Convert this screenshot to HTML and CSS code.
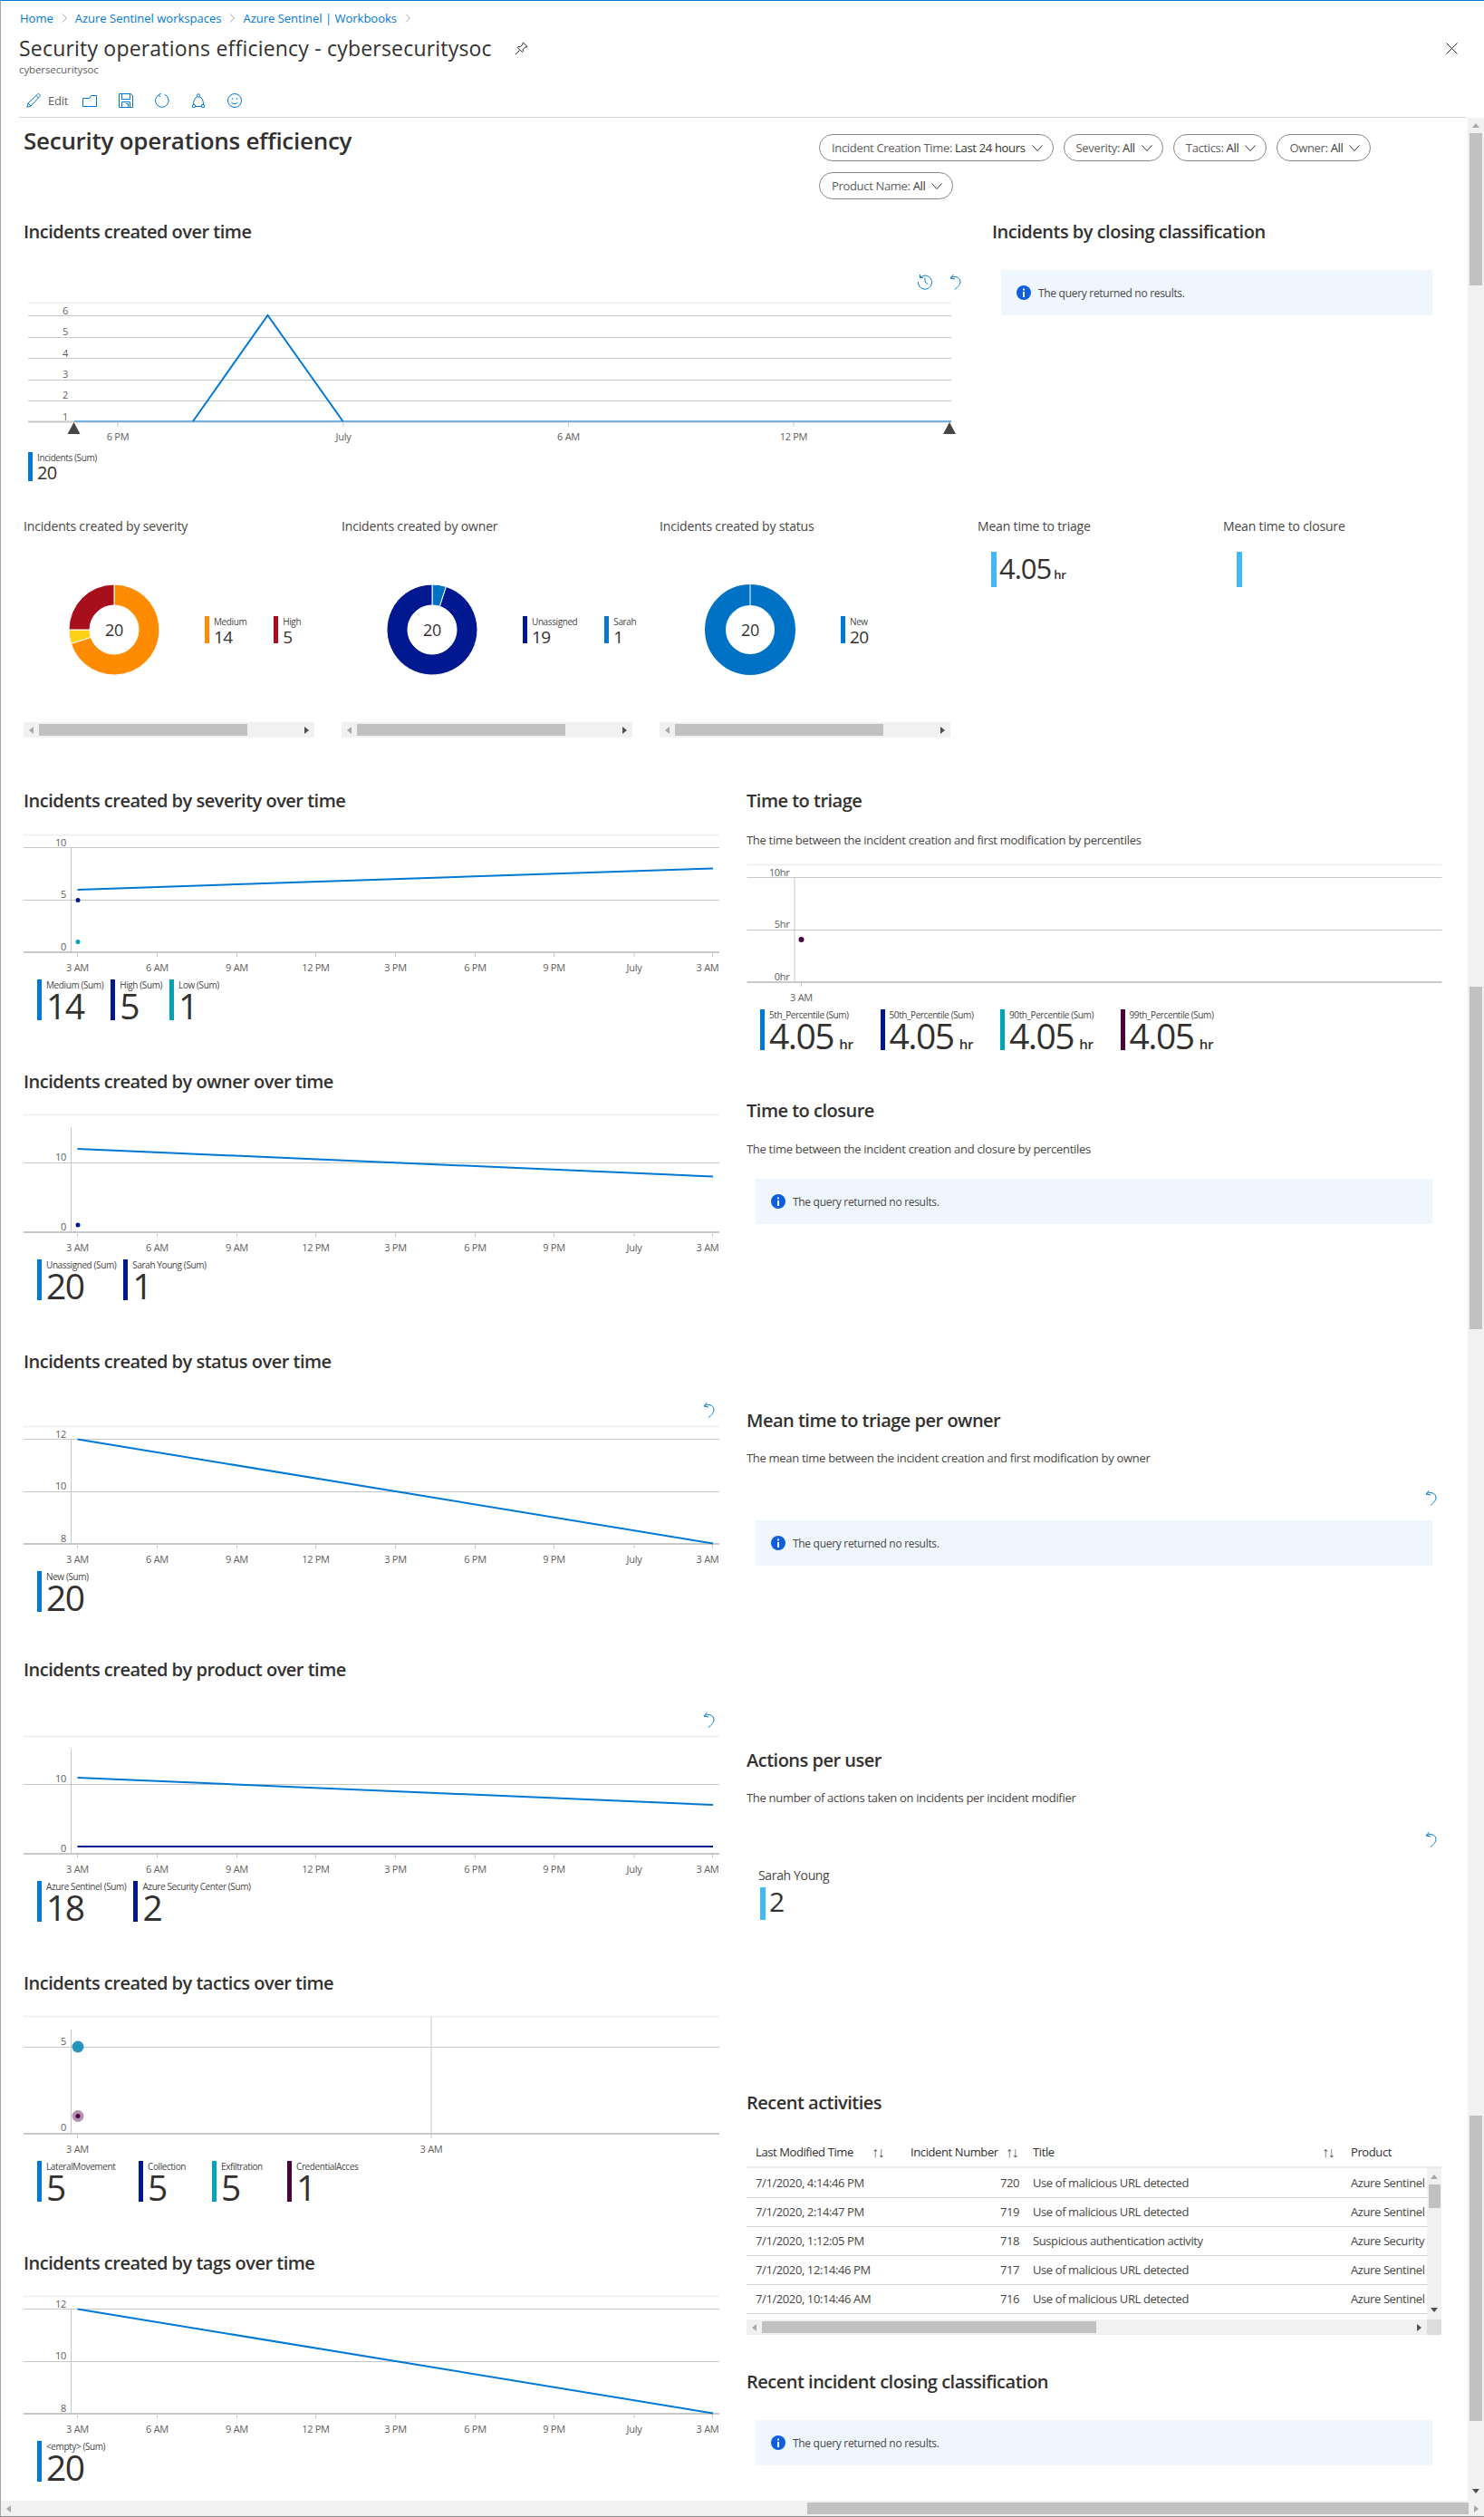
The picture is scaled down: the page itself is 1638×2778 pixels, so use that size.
FILE: index.html
```html
<!DOCTYPE html>
<html lang="en">
<head>
<meta charset="utf-8">
<title>Security operations efficiency - cybersecuritysoc</title>
<link rel="stylesheet" href="styles.css">
</head>
<body>
<div class="blade">
  <header class="head">
    <nav class="crumbs">
      <a>Home</a><svg class="crumb-sep" viewBox="0 0 6 10"><path d="M1 .5 5.5 5 1 9.5"/></svg>
      <a>Azure Sentinel workspaces</a><svg class="crumb-sep" viewBox="0 0 6 10"><path d="M1 .5 5.5 5 1 9.5"/></svg>
      <a>Azure Sentinel | Workbooks</a><svg class="crumb-sep" viewBox="0 0 6 10"><path d="M1 .5 5.5 5 1 9.5"/></svg>
    </nav>
    <div class="title-row">
      <div class="blade-title">Security operations efficiency - cybersecuritysoc</div>
      <svg class="pin" viewBox="0 0 15 15"><path d="M9.5 1 14 5.5l-1 .6-1-.4-2.7 2.7.1 2.2-1 1L3.200 6.400l1-1 2.200.1L9.100 2.800l-.4-1zM5.500 9.500 1 14"/></svg>
      <svg class="close" viewBox="0 0 13 13"><path d="M.5.5l12 12M12.500.5l-12 12"/></svg>
    </div>
    <div class="sub">cybersecuritysoc</div>
    <div class="toolbar">
      <span class="tool-edit">
        <svg class="ic" viewBox="0 0 16 16"><path d="M12.500 1c.7-.5 1.700-.4 2.200.2.600.6.700 1.500.2 2.200L5 14 .8 15.200 2 11zM2 11l3 3M11 2.600l2.600 2.600"/></svg>
        <span>Edit</span>
      </span>
      <svg class="ic" viewBox="0 0 16 16"><path d="M.5 5.500H8L9.500 2.500H15.500V14.500H.5Z"/></svg>
      <svg class="ic" viewBox="0 0 16 16"><path d="M.5.5h13l2 2v13H.5zM3.500.5v6h9v-6M3.500 15.500v-6h9v6M8 11.500h2.500v4"/></svg>
      <svg class="ic" viewBox="0 0 16 16"><path d="M10.500 1.200A7.300 7.300 0 1 1 4.500 1.500M4.500 1.500 7 0M4.500 1.500 5.500 4"/></svg>
      <svg class="ic" viewBox="0 0 16 16"><circle cx="8" cy="2.500" r="1.700"/><circle cx="3" cy="14" r="1.700"/><circle cx="13" cy="14" r="1.700"/><path d="M6.800 3.500C4 5 2.500 8 2.500 12.300M9.200 3.500C12 5 13.500 8 13.500 12.300M4.700 14.500h6.600"/></svg>
      <svg class="ic" viewBox="0 0 16 16"><circle cx="8" cy="8" r="7.500"/><circle class="ic-dot" cx="5.500" cy="6" r=".8"/><circle class="ic-dot" cx="10.500" cy="6" r=".8"/><path d="M4.500 10c1.800 2.200 5.200 2.200 7 0"/></svg>
    </div>
  </header>

  <div class="work">
    <main class="main">
      <div class="top">
        <div class="top-title"><h1>Security operations efficiency</h1></div>
        <div class="filters">
          <button class="pill"><span>Incident Creation Time: <b>Last 24 hours</b></span><svg class="chev" viewBox="0 0 12 7"><path d="M.5.500 6 6.500 11.500.5"/></svg></button>
          <button class="pill"><span>Severity: <b>All</b></span><svg class="chev" viewBox="0 0 12 7"><path d="M.5.500 6 6.500 11.500.5"/></svg></button>
          <button class="pill"><span>Tactics: <b>All</b></span><svg class="chev" viewBox="0 0 12 7"><path d="M.5.500 6 6.500 11.500.5"/></svg></button>
          <button class="pill"><span>Owner: <b>All</b></span><svg class="chev" viewBox="0 0 12 7"><path d="M.5.500 6 6.500 11.500.5"/></svg></button>
          <button class="pill"><span>Product Name: <b>All</b></span><svg class="chev" viewBox="0 0 12 7"><path d="M.5.500 6 6.500 11.500.5"/></svg></button>
        </div>
      </div>

      <div class="over">
        <section class="over-left">
          <h2>Incidents created over time</h2>
          <div class="tools tools-over">
            <svg class="ic-undo hist" viewBox="0 0 18 18"><path d="M3.500 4.500A7.500 7.500 0 1 1 1.500 9M3.500 1v3.500H7M9 4.500V9l3 2.500"/></svg>
            <svg class="ic-undo" viewBox="0 0 14 18"><path d="M4.500 1 1 5l5 1M1 5c4-3 11-1.500 11 4 0 3-3 6-6 8.500"/></svg>
          </div>
          <svg class="chart chart-wide" viewBox="31 334 1024 158">
            <path class="top-line" d="M31 334.500H1050"/>
            <path class="grid" d="M31 348.500H1050M31 372.500H1050M31 395.500H1050M31 419.500H1050M31 442.500H1050"/>
            <path class="axis" d="M31 465.500H1050"/>
            <path class="tk" d="M130 466v5M379 466v5M627.500 466v5M876 466v5"/>
            <text class="yl" x="75" y="347">6</text><text class="yl" x="75" y="370">5</text><text class="yl" x="75" y="394">4</text><text class="yl" x="75" y="417">3</text><text class="yl" x="75" y="440">2</text><text class="yl" x="75" y="464">1</text>
            <text class="xl" x="130" y="486">6 PM</text><text class="xl" x="379" y="486">July</text><text class="xl" x="627.500" y="486">6 AM</text><text class="xl" x="876" y="486">12 PM</text>
            <polyline class="flat" points="82,465 1050,465"/>
            <polyline class="ln" points="213,465 295.500,348 378.500,465"/>
            <path class="handle" d="M81.500 466l7 13h-14zM1048 466l7 13h-14z"/>
          </svg>
          <div class="kpi kpi-mid c-blue"><div class="k-l">Incidents (Sum)</div><div class="k-v">20</div></div>
        </section>
        <section class="over-right">
          <h2>Incidents by closing classification</h2>
          <div class="notice notice-over">
            <svg class="info" viewBox="0 0 16 16"><circle cx="8" cy="8" r="8"/><rect x="7" y="7" width="2" height="6"/><rect x="7" y="3.500" width="2" height="2"/></svg>
            <span>The query returned no results.</span>
          </div>
        </section>
      </div>

      <div class="tiles">
        <section class="tile">
          <h3>Incidents created by severity</h3>
          <div class="donut-body">
            <svg class="donut" viewBox="0 0 100 100">
              <path class="w-orange" d="M50 0A50 50 0 1 1 2.450 65.450L24.320 58.340A27 27 0 1 0 50 23Z"/>
              <path class="w-yellow" d="M2.450 65.450A50 50 0 0 1 0 50L23 50A27 27 0 0 0 24.320 58.340Z"/>
              <path class="w-red" d="M0 50A50 50 0 0 1 50 0L50 23A27 27 0 0 0 23 50Z"/>
              <text class="dn" x="50" y="57">20</text>
            </svg>
            <div class="d-legend">
              <div class="kpi kpi-sm c-orange"><div class="k-l">Medium</div><div class="k-v">14</div></div>
              <div class="kpi kpi-sm c-red"><div class="k-l">High</div><div class="k-v">5</div></div>
            </div>
          </div>
          <div class="hs"><i class="a-l"></i><i class="th th-tile"></i><i class="sp"></i><i class="a-r"></i></div>
        </section>
        <section class="tile">
          <h3>Incidents created by owner</h3>
          <div class="donut-body">
            <svg class="donut" viewBox="0 0 100 100">
              <path class="w-blue" d="M50 0A50 50 0 0 1 65.450 2.450L58.340 24.320A27 27 0 0 0 50 23Z"/>
              <path class="w-navy" d="M65.450 2.450A50 50 0 1 1 50 0L50 23A27 27 0 1 0 58.340 24.320Z"/>
              <text class="dn" x="50" y="57">20</text>
            </svg>
            <div class="d-legend">
              <div class="kpi kpi-sm c-navy"><div class="k-l">Unassigned</div><div class="k-v">19</div></div>
              <div class="kpi kpi-sm c-blue"><div class="k-l">Sarah</div><div class="k-v">1</div></div>
            </div>
          </div>
          <div class="hs"><i class="a-l"></i><i class="th th-tile"></i><i class="sp"></i><i class="a-r"></i></div>
        </section>
        <section class="tile">
          <h3>Incidents created by status</h3>
          <div class="donut-body">
            <svg class="donut" viewBox="0 0 100 100">
              <circle class="w-ring" cx="50" cy="50" r="38.500"/>
              <path class="w-cut" d="M50 0V23"/>
              <text class="dn" x="50" y="57">20</text>
            </svg>
            <div class="d-legend">
              <div class="kpi kpi-sm c-blue"><div class="k-l">New</div><div class="k-v">20</div></div>
            </div>
          </div>
          <div class="hs"><i class="a-l"></i><i class="th th-tile"></i><i class="sp"></i><i class="a-r"></i></div>
        </section>
        <section class="tile tile-mean">
          <h3>Mean time to triage</h3>
          <div class="kpi kpi-mean c-sky"><span class="k-v">4.05</span><span class="k-u">hr</span></div>
        </section>
        <section class="tile tile-mean">
          <h3>Mean time to closure</h3>
          <div class="kpi kpi-mean c-sky"></div>
        </section>
      </div>

      <div class="cols">
        <div class="col">
          <section class="sec">
            <h2>Incidents created by severity over time</h2>
            <svg class="chart mt-23" viewBox="26 921 768 152">
              <path class="top-line" d="M26 921.500H794"/>
              <path class="grid" d="M26 935.500H794M26 993.500H794M78.500 935V1050"/>
              <path class="axis" d="M26 1051H794"/>
              <text class="yl" x="73" y="934">10</text><text class="yl" x="73" y="991">5</text><text class="yl" x="73" y="1049">0</text>
              <g transform="translate(0 1051)">
                <path class="tk" d="M85.500 0v5M173.500 0v5M261.500 0v5M348.500 0v5M436.500 0v5M524.500 0v5M611.500 0v5M700 0v5M786.500 0v5"/>
                <text class="xl" x="85.500" y="21">3 AM</text><text class="xl" x="173.500" y="21">6 AM</text><text class="xl" x="261.500" y="21">9 AM</text><text class="xl" x="348.500" y="21">12 PM</text><text class="xl" x="436.500" y="21">3 PM</text><text class="xl" x="524.500" y="21">6 PM</text><text class="xl" x="611.500" y="21">9 PM</text><text class="xl" x="700" y="21">July</text><text class="xl" x="781" y="21">3 AM</text>
              </g>
              <line class="ln" x1="85.500" y1="982" x2="787" y2="958.500"/>
              <circle class="dot-navy" cx="86" cy="993.500" r="2.500"/><circle class="dot-teal" cx="86" cy="1039.500" r="2.500"/>
            </svg>
            <div class="legend">
              <div class="kpi c-blue"><div class="k-l">Medium (Sum)</div><div class="k-v">14</div></div>
              <div class="kpi c-navy"><div class="k-l">High (Sum)</div><div class="k-v">5</div></div>
              <div class="kpi c-teal"><div class="k-l">Low (Sum)</div><div class="k-v">1</div></div>
            </div>
          </section>
          <section class="sec mt-54">
            <h2>Incidents created by owner over time</h2>
            <svg class="chart mt-22" viewBox="26 1230 768 152">
              <path class="top-line" d="M26 1230.500H794"/>
              <path class="grid" d="M26 1283.500H794M78.500 1244V1359"/>
              <path class="axis" d="M26 1360H794"/>
              <text class="yl" x="73" y="1281">10</text><text class="yl" x="73" y="1358">0</text>
              <g transform="translate(0 1360)">
                <path class="tk" d="M85.500 0v5M173.500 0v5M261.500 0v5M348.500 0v5M436.500 0v5M524.500 0v5M611.500 0v5M700 0v5M786.500 0v5"/>
                <text class="xl" x="85.500" y="21">3 AM</text><text class="xl" x="173.500" y="21">6 AM</text><text class="xl" x="261.500" y="21">9 AM</text><text class="xl" x="348.500" y="21">12 PM</text><text class="xl" x="436.500" y="21">3 PM</text><text class="xl" x="524.500" y="21">6 PM</text><text class="xl" x="611.500" y="21">9 PM</text><text class="xl" x="700" y="21">July</text><text class="xl" x="781" y="21">3 AM</text>
              </g>
              <line class="ln" x1="85.500" y1="1268" x2="787" y2="1298.500"/>
              <circle class="dot-navy" cx="86" cy="1352" r="2.500"/>
            </svg>
            <div class="legend">
              <div class="kpi c-blue"><div class="k-l">Unassigned (Sum)</div><div class="k-v">20</div></div>
              <div class="kpi c-navy"><div class="k-l">Sarah Young (Sum)</div><div class="k-v">1</div></div>
            </div>
          </section>
          <section class="sec mt-54">
            <h2>Incidents created by status over time</h2>
            <div class="tools mt-30"><svg class="ic-undo" viewBox="0 0 14 18"><path d="M4.500 1 1 5l5 1M1 5c4-3 11-1.500 11 4 0 3-3 6-6 8.500"/></svg></div>
            <svg class="chart mt-9" viewBox="26 1574 768 152">
              <path class="top-line" d="M26 1574.500H794"/>
              <path class="grid" d="M26 1588.500H794M26 1646.500H794M78.500 1588V1703"/>
              <path class="axis" d="M26 1704H794"/>
              <text class="yl" x="73" y="1587">12</text><text class="yl" x="73" y="1644">10</text><text class="yl" x="73" y="1702">8</text>
              <g transform="translate(0 1704)">
                <path class="tk" d="M85.500 0v5M173.500 0v5M261.500 0v5M348.500 0v5M436.500 0v5M524.500 0v5M611.500 0v5M700 0v5M786.500 0v5"/>
                <text class="xl" x="85.500" y="21">3 AM</text><text class="xl" x="173.500" y="21">6 AM</text><text class="xl" x="261.500" y="21">9 AM</text><text class="xl" x="348.500" y="21">12 PM</text><text class="xl" x="436.500" y="21">3 PM</text><text class="xl" x="524.500" y="21">6 PM</text><text class="xl" x="611.500" y="21">9 PM</text><text class="xl" x="700" y="21">July</text><text class="xl" x="781" y="21">3 AM</text>
              </g>
              <line class="ln" x1="85.500" y1="1588.500" x2="787" y2="1703.500"/>
            </svg>
            <div class="legend">
              <div class="kpi c-blue"><div class="k-l">New (Sum)</div><div class="k-v">20</div></div>
            </div>
          </section>
          <section class="sec mt-50">
            <h2>Incidents created by product over time</h2>
            <div class="tools mt-32"><svg class="ic-undo" viewBox="0 0 14 18"><path d="M4.500 1 1 5l5 1M1 5c4-3 11-1.500 11 4 0 3-3 6-6 8.500"/></svg></div>
            <svg class="chart mt-9" viewBox="26 1916 768 152">
              <path class="top-line" d="M26 1916.500H794"/>
              <path class="grid" d="M26 1969.500H794M78.500 1930V2045"/>
              <path class="axis" d="M26 2046H794"/>
              <text class="yl" x="73" y="1967">10</text><text class="yl" x="73" y="2044">0</text>
              <g transform="translate(0 2046)">
                <path class="tk" d="M85.500 0v5M173.500 0v5M261.500 0v5M348.500 0v5M436.500 0v5M524.500 0v5M611.500 0v5M700 0v5M786.500 0v5"/>
                <text class="xl" x="85.500" y="21">3 AM</text><text class="xl" x="173.500" y="21">6 AM</text><text class="xl" x="261.500" y="21">9 AM</text><text class="xl" x="348.500" y="21">12 PM</text><text class="xl" x="436.500" y="21">3 PM</text><text class="xl" x="524.500" y="21">6 PM</text><text class="xl" x="611.500" y="21">9 PM</text><text class="xl" x="700" y="21">July</text><text class="xl" x="781" y="21">3 AM</text>
              </g>
              <line class="ln" x1="85.500" y1="1962" x2="787" y2="1992"/>
              <line class="ln-navy" x1="85.500" y1="2038" x2="787" y2="2038"/>
            </svg>
            <div class="legend">
              <div class="kpi c-blue"><div class="k-l">Azure Sentinel (Sum)</div><div class="k-v">18</div></div>
              <div class="kpi c-navy"><div class="k-l">Azure Security Center (Sum)</div><div class="k-v">2</div></div>
            </div>
          </section>
          <section class="sec mt-54">
            <h2>Incidents created by tactics over time</h2>
            <svg class="chart mt-22" viewBox="26 2225 768 152">
              <path class="top-line" d="M26 2225.500H794"/>
              <path class="grid" d="M26 2259.500H794M78.500 2240V2354"/>
              <path class="cursor" d="M476 2225V2355"/>
              <path class="axis" d="M26 2355H794"/>
              <text class="yl" x="73" y="2257">5</text><text class="yl" x="73" y="2352">0</text>
              <path class="tk" d="M85.500 2355v5M476 2355v5"/>
              <text class="xl" x="85.500" y="2376">3 AM</text><text class="xl" x="476" y="2376">3 AM</text>
              <circle class="halo-teal" cx="86" cy="2259" r="6.500"/><circle class="dot-teal" cx="86" cy="2259" r="2"/>
              <circle class="halo-purple" cx="86" cy="2335.500" r="6.500"/><circle class="dot-purple" cx="86" cy="2335.500" r="2.500"/>
            </svg>
            <div class="legend legend-tactics">
              <div class="kpi c-blue"><div class="k-l">LateralMovement</div><div class="k-v">5</div></div>
              <div class="kpi c-navy"><div class="k-l">Collection</div><div class="k-v">5</div></div>
              <div class="kpi c-teal"><div class="k-l">Exfiltration</div><div class="k-v">5</div></div>
              <div class="kpi c-purple"><div class="k-l k-clip">CredentialAccess</div><div class="k-v">1</div></div>
            </div>
          </section>
          <section class="sec mt-54">
            <h2>Incidents created by tags over time</h2>
            <svg class="chart mt-22" viewBox="26 2534 768 152">
              <path class="top-line" d="M26 2534.500H794"/>
              <path class="grid" d="M26 2548.500H794M26 2606.500H794M78.500 2548V2663"/>
              <path class="axis" d="M26 2664H794"/>
              <text class="yl" x="73" y="2547">12</text><text class="yl" x="73" y="2604">10</text><text class="yl" x="73" y="2662">8</text>
              <g transform="translate(0 2664)">
                <path class="tk" d="M85.500 0v5M173.500 0v5M261.500 0v5M348.500 0v5M436.500 0v5M524.500 0v5M611.500 0v5M700 0v5M786.500 0v5"/>
                <text class="xl" x="85.500" y="21">3 AM</text><text class="xl" x="173.500" y="21">6 AM</text><text class="xl" x="261.500" y="21">9 AM</text><text class="xl" x="348.500" y="21">12 PM</text><text class="xl" x="436.500" y="21">3 PM</text><text class="xl" x="524.500" y="21">6 PM</text><text class="xl" x="611.500" y="21">9 PM</text><text class="xl" x="700" y="21">July</text><text class="xl" x="781" y="21">3 AM</text>
              </g>
              <line class="ln" x1="85.500" y1="2548.500" x2="787" y2="2663.500"/>
            </svg>
            <div class="legend">
              <div class="kpi c-blue"><div class="k-l">&lt;empty&gt; (Sum)</div><div class="k-v">20</div></div>
            </div>
          </section>
        </div>

        <div class="col">
          <section class="sec">
            <h2>Time to triage</h2>
            <p class="desc mt-19">The time between the incident creation and first modification by percentiles</p>
            <svg class="chart mt-17" viewBox="824 954 767 152">
              <path class="top-line" d="M824 954.500H1591"/>
              <path class="grid" d="M824 968.500H1591M824 1026.500H1591M876.500 968V1083"/>
              <path class="axis" d="M824 1084H1591"/>
              <text class="yl" x="871" y="967">10hr</text><text class="yl" x="871" y="1024">5hr</text><text class="yl" x="871" y="1082">0hr</text>
              <path class="tk" d="M884 1084v5"/>
              <text class="xl" x="884" y="1105">3 AM</text>
              <circle class="dot-purple" cx="884" cy="1037" r="3"/>
            </svg>
            <div class="legend legend-pct">
              <div class="kpi c-blue"><div class="k-l">5th_Percentile (Sum)</div><div class="k-line"><span class="k-v">4.05</span><span class="k-u">hr</span></div></div>
              <div class="kpi c-navy"><div class="k-l">50th_Percentile (Sum)</div><div class="k-line"><span class="k-v">4.05</span><span class="k-u">hr</span></div></div>
              <div class="kpi c-teal"><div class="k-l">90th_Percentile (Sum)</div><div class="k-line"><span class="k-v">4.05</span><span class="k-u">hr</span></div></div>
              <div class="kpi c-purple"><div class="k-l">99th_Percentile (Sum)</div><div class="k-line"><span class="k-v">4.05</span><span class="k-u">hr</span></div></div>
            </div>
          </section>
          <section class="sec mt-53">
            <h2>Time to closure</h2>
            <p class="desc mt-18">The time between the incident creation and closure by percentiles</p>
            <div class="notice mt-23">
              <svg class="info" viewBox="0 0 16 16"><circle cx="8" cy="8" r="8"/><rect x="7" y="7" width="2" height="6"/><rect x="7" y="3.500" width="2" height="2"/></svg>
              <span>The query returned no results.</span>
            </div>
          </section>
          <section class="sec mt-203">
            <h2>Mean time to triage per owner</h2>
            <p class="desc mt-17">The mean time between the incident creation and first modification by owner</p>
            <div class="tools mt-25"><svg class="ic-undo" viewBox="0 0 14 18"><path d="M4.500 1 1 5l5 1M1 5c4-3 11-1.500 11 4 0 3-3 6-6 8.500"/></svg></div>
            <div class="notice mt-16">
              <svg class="info" viewBox="0 0 16 16"><circle cx="8" cy="8" r="8"/><rect x="7" y="7" width="2" height="6"/><rect x="7" y="3.500" width="2" height="2"/></svg>
              <span>The query returned no results.</span>
            </div>
          </section>
          <section class="sec mt-201">
            <h2>Actions per user</h2>
            <p class="desc mt-17">The number of actions taken on incidents per incident modifier</p>
            <div class="tools mt-27"><svg class="ic-undo" viewBox="0 0 14 18"><path d="M4.500 1 1 5l5 1M1 5c4-3 11-1.500 11 4 0 3-3 6-6 8.500"/></svg></div>
            <div class="user-name">Sarah Young</div>
            <div class="kpi kpi-user c-sky"><span class="k-v">2</span></div>
          </section>
          <section class="sec mt-188">
            <h2>Recent activities</h2>
            <div class="grid-wrap">
              <div class="grid-head">
                <table class="tbl tbl-head">
                  <colgroup><col class="c1"><col class="c2"><col class="c3"><col class="c4"></colgroup>
                  <tr>
                    <th><div class="th-in th-1"><span>Last Modified Time</span><span class="sort">↑↓</span></div></th>
                    <th><div class="th-in th-2"><span>Incident Number</span><span class="sort">↑↓</span></div></th>
                    <th><div class="th-in th-3"><span>Title</span><span class="sort">↑↓</span></div></th>
                    <th><div class="th-in th-4"><span>Product</span></div></th>
                  </tr>
                </table>
              </div>
              <div class="grid-body">
                <table class="tbl">
                  <colgroup><col class="c1"><col class="c2"><col class="c3"><col class="c4"></colgroup>
                  <tr><td>7/1/2020, 4:14:46 PM</td><td class="num">720</td><td>Use of malicious URL detected</td><td>Azure Sentinel</td></tr>
                  <tr><td>7/1/2020, 2:14:47 PM</td><td class="num">719</td><td>Use of malicious URL detected</td><td>Azure Sentinel</td></tr>
                  <tr><td>7/1/2020, 1:12:05 PM</td><td class="num">718</td><td>Suspicious authentication activity</td><td>Azure Security</td></tr>
                  <tr><td>7/1/2020, 12:14:46 PM</td><td class="num">717</td><td>Use of malicious URL detected</td><td>Azure Sentinel</td></tr>
                  <tr><td>7/1/2020, 10:14:46 AM</td><td class="num">716</td><td>Use of malicious URL detected</td><td>Azure Sentinel</td></tr>
                </table>
                <div class="vs"><i class="a-u"></i><i class="vs-th"></i><i class="a-d"></i></div>
              </div>
              <div class="grid-foot">
                <div class="hs hs-grid"><i class="a-l"></i><i class="th th-grid"></i><i class="sp"></i><i class="a-r"></i></div>
                <div class="corner"></div>
              </div>
            </div>
          </section>
          <section class="sec mt-38">
            <h2>Recent incident closing classification</h2>
            <div class="notice mt-28">
              <svg class="info" viewBox="0 0 16 16"><circle cx="8" cy="8" r="8"/><rect x="7" y="7" width="2" height="6"/><rect x="7" y="3.500" width="2" height="2"/></svg>
              <span>The query returned no results.</span>
            </div>
          </section>
        </div>
      </div>
    </main>
    <aside class="page-vs">
      <i class="a-u a-u-page"></i>
      <i class="pv pv-1"></i>
      <i class="pv pv-2"></i>
      <i class="pv pv-3"></i>
      <i class="a-d a-d-page"></i>
    </aside>
  </div>
  <div class="page-hs"><i class="a-l"></i><i class="sp"></i><i class="th th-page"></i><i class="a-r a-r-dim"></i></div>
</div>
</body>
</html>
```

FILE: styles.css
```css
* { box-sizing: border-box; }
html, body { margin: 0; padding: 0; background: #fff; }
body {
  width: 1638px;
  height: 2778px;
  overflow: hidden;
  font-family: "Open Sans", "Noto Sans", sans-serif;
  color: #323130;
}
.blade {
  height: 2778px;
  display: flex;
  flex-direction: column;
  border-top: 1px solid #0078d4;
  border-left: 1px solid #a6a6a6;
  border-bottom: 1px solid #8a8a8a;
}

/* header */
.head { margin: 0 20px; height: 129px; border-bottom: 1px solid #d2d2d2; flex: none; }
.crumbs { display: flex; align-items: center; height: 20px; margin-top: 9px; padding-left: 1px; font-size: 13px; letter-spacing: 0; color: #0078d4; }
.crumb-sep { width: 6px; height: 10px; margin: 0 9px 0 9px; fill: none; stroke: #8a8886; stroke-width: .8; }
.title-row { display: flex; align-items: center; height: 30px; margin-top: 8px; }
.blade-title { font-size: 23px; font-weight: 500; letter-spacing: .2px; line-height: 30px; white-space: nowrap; }
.pin { width: 15px; height: 15px; margin-left: 25px; fill: none; stroke: #252423; stroke-width: 1; }
.close { width: 13px; height: 13px; margin-left: auto; margin-right: 9px; fill: none; stroke: #323130; stroke-width: 1; }
.sub { height: 16px; margin-top: 1px; font-size: 11.500px; line-height: 16px; color: #605e5c; letter-spacing: -.1px; }
.toolbar { display: flex; align-items: center; gap: 24px; margin-top: 18px; padding-left: 8px; height: 16px; }
.tool-edit { display: flex; align-items: center; gap: 8px; font-size: 13px; letter-spacing: -.2px; margin-right: -8px; color: #605e5c; }
.ic { width: 16px; height: 16px; fill: none; stroke: #0078d4; stroke-width: 1; flex: none; }
.ic-dot { fill: #0078d4; stroke: none; }

/* frame */
.work { flex: 1; display: flex; min-height: 0; }
.main { width: 1619px; padding-left: 25px; overflow: hidden; }
.page-vs { width: 18px; flex: none; background: #f1f1f1; display: flex; flex-direction: column; align-items: center; }
.pv { display: block; width: 14px; background: #c1c1c1; flex: none; }
.pv-1 { height: 168px; }
.pv-2 { height: 378px; margin-top: 774px; }
.pv-3 { height: 337px; margin-top: 868px; }
.page-hs { height: 17px; flex: none; display: flex; align-items: center; background: #f1f1f1; }

/* scrollbar parts */
.a-l, .a-r, .a-u, .a-d { display: block; width: 0; height: 0; flex: none; border-style: solid; border-color: transparent; }
.a-l { border-width: 4px 5px 4px 0; border-right-color: #a8a8a8; margin: 0 6px; }
.a-r { border-width: 4px 0 4px 5px; border-left-color: #505050; margin: 0 6px; }
.a-r-dim { border-left-color: #a8a8a8; }
.a-u { border-width: 0 4px 5px; border-bottom-color: #a8a8a8; }
.a-d { border-width: 5px 4px 0; border-top-color: #505050; }
.a-u-page { margin: 6px 0; }
.a-d-page { margin-top: auto; margin-bottom: 8px; }
.th { display: block; height: 13px; background: #c1c1c1; flex: none; }
.sp { display: block; flex: 1; }
.hs { display: flex; align-items: center; height: 17px; background: #f1f1f1; }
.th-tile { width: 230px; }
.th-grid { width: 369px; }
.th-page { width: 730px; }

/* top */
.top { display: flex; height: 90px; }
.top-title { width: 878px; flex: none; }
h1 { margin: 8px 0 0; font-size: 26px; line-height: 34px; font-weight: 600; letter-spacing: -.27px; white-space: nowrap; }
.filters { display: flex; flex-wrap: wrap; align-content: flex-start; gap: 12px 11px; padding-top: 18px; width: 716px; }
.pill {
  display: flex; align-items: center; gap: 7px;
  height: 30px; padding: 0 11px 0 13px;
  background: #fff; border: 1px solid #8a8886; border-radius: 15px;
  font: 400 13px "Open Sans", sans-serif; letter-spacing: -.33px; color: #605e5c; white-space: nowrap;
}
.pill b { font-weight: 400; color: #323130; }
.chev { width: 12px; height: 7px; fill: none; stroke: #323130; stroke-width: 1; }

/* headings */
h2 { margin: 0; font-size: 20px; line-height: 28px; font-weight: 600; letter-spacing: -.5px; white-space: nowrap; }
h3 { margin: 0; font-size: 14px; line-height: 20px; font-weight: 400; letter-spacing: -.17px; color: #484644; white-space: nowrap; }
.desc { margin: 0; height: 20px; font-size: 13px; line-height: 20px; letter-spacing: -.3px; color: #484644; white-space: nowrap; }

/* over-time row */
.over { display: flex; margin-top: 22px; }
.over-left { width: 1069px; flex: none; }
.over-right { width: 486px; flex: none; }
.tools { display: flex; justify-content: flex-end; align-items: center; gap: 18px; height: 18px; padding-right: 4px; }
.tools-over { margin-top: 32px; margin-right: 29px; padding-right: 4px; }
.ic-undo { width: 14px; height: 18px; fill: none; stroke: #0078d4; stroke-width: 1; flex: none; }
.hist { width: 18px; }
.chart { display: block; width: 768px; height: 152px; overflow: visible; }
.chart-wide { width: 1024px; height: 158px; margin: 14px 0 0 5px; }
.over-left > .kpi { margin: 7px 0 0 5px; }
.notice-over { margin-left: 10px; margin-top: 28px; width: 476px; }

/* chart parts */
.top-line { stroke: #ededed; stroke-width: 1.500; fill: none; }
.grid { stroke: #c8c8c8; stroke-width: 1; fill: none; }
.axis { stroke: #c8c8c8; stroke-width: 2; fill: none; }
.cursor { stroke: #dcdcdc; stroke-width: 1.500; fill: none; }
.tk { stroke: #c8c8c8; stroke-width: 1; fill: none; }
.yl, .xl { font-size: 11px; fill: #605e5c; letter-spacing: -.3px; }
.yl { text-anchor: end; }
.xl { text-anchor: middle; }
.ln { stroke: #0078d4; stroke-width: 2; fill: none; }
.flat { stroke: #5aa5e0; stroke-width: 1.500; fill: none; }
.ln-navy { stroke: #00188f; stroke-width: 2; fill: none; }
.handle { fill: #484644; }
.dot-navy { fill: #00188f; }
.dot-teal { fill: #00a4b4; }
.dot-purple { fill: #4b003f; }
.halo-teal { fill: #2d93bd; }
.halo-purple { fill: #b591b0; }

/* kpis */
.kpi { border-left: 5px solid; padding-left: 5px; height: 45px; flex: none; color: #323130; }
.k-l { font-size: 10px; line-height: 12px; letter-spacing: -.4px; color: #484644; white-space: nowrap; }
.k-v { font-size: 39px; line-height: 33px; letter-spacing: -1.500px; font-weight: 400; }
.k-line { display: flex; align-items: baseline; }
.k-u { font-size: 15px; font-weight: 600; margin-left: 6px; letter-spacing: -.3px; }
.k-clip { width: 69px; overflow: hidden; }
.kpi-mid { height: 32px; }
.kpi-mid .k-l { line-height: 13px; }
.kpi-mid .k-v { font-size: 20px; line-height: 20px; letter-spacing: -.6px; }
.kpi-sm { height: 30px; }
.kpi-sm .k-l { line-height: 13px; }
.kpi-sm .k-v { font-size: 19px; line-height: 20px; letter-spacing: -.6px; }
.kpi-mean { border-left-width: 6px; padding-left: 3px; height: 39px; width: fit-content; margin: 18px 0 0 15px; display: flex; align-items: baseline; }
.kpi-mean .k-v { font-size: 31px; line-height: 36px; letter-spacing: -1px; }
.kpi-mean .k-u { font-size: 13px; margin-left: 3px; }
.kpi-user { border-left-width: 6px; padding-left: 4px; height: 36px; width: fit-content; margin: 3px 0 0 15px; }
.kpi-user .k-v { font-size: 30px; line-height: 31px; }
.c-blue { border-color: #0078d4; }
.c-navy { border-color: #00188f; }
.c-teal { border-color: #00a4b4; }
.c-purple { border-color: #4b003f; }
.c-orange { border-color: #ff8c00; }
.c-red { border-color: #a80f1c; }
.c-sky { border-color: #40b9f5; }
.legend { display: flex; gap: 8px; margin: 8px 0 0 15px; }
.legend-tactics { display: grid; grid-template-columns: 112px 81px 83px auto; gap: 0; }
.legend-pct { display: grid; grid-template-columns: repeat(4, 132.500px); gap: 0; }

/* tiles */
.tiles { display: flex; gap: 30px; margin-top: 40px; }
.tile { width: 321px; flex: none; }
.tile-mean { width: 241px; }
.donut-body { height: 206px; display: flex; align-items: center; padding: 2px 0 0 50px; }
.donut { width: 100px; height: 100px; flex: none; overflow: visible; }
.d-legend { display: flex; gap: 30px; margin-left: 50px; }
.w-orange { fill: #ff8c00; stroke: #fff; stroke-width: 1; }
.w-yellow { fill: #fcd116; stroke: #fff; stroke-width: 1; }
.w-red { fill: #a80f1c; stroke: #fff; stroke-width: 1; }
.w-blue { fill: #0072c6; stroke: #fff; stroke-width: 1; }
.w-navy { fill: #00188f; stroke: #fff; stroke-width: 1; }
.w-ring { fill: none; stroke: #0072c6; stroke-width: 23; }
.w-cut { stroke: #fff; stroke-width: 1; }
.dn { font-size: 18px; text-anchor: middle; fill: #323130; letter-spacing: -.4px; }

/* columns */
.cols { display: flex; gap: 30px; margin-top: 56px; }
.col { width: 768px; flex: none; }
.col + .col { width: 767px; }
.notice {
  display: flex; align-items: center; gap: 8px;
  height: 50px; margin-left: 10px; margin-right: 10px; padding-left: 17px;
  background: #eff6fe; font-size: 12px; letter-spacing: -.3px; color: #484644;
}
.info { width: 16px; height: 16px; fill: #0f5fdc; flex: none; }
.info rect { fill: #fff; }
.user-name { margin: 21px 0 0 13px; height: 20px; font-size: 14px; line-height: 20px; letter-spacing: -.35px; color: #484644; }

/* table */
.grid-wrap { margin-top: 24px; }
.grid-head { height: 34px; border-bottom: 2px solid #eaeaea; }
.tbl { width: 751px; table-layout: fixed; border-collapse: collapse; font-size: 13px; letter-spacing: -.4px; flex: none; }
.c1 { width: 171px; }
.c2 { width: 137px; }
.c3 { width: 351px; }
.c4 { width: 92px; }
.tbl-head th { height: 32px; padding: 0; font-weight: 400; text-align: left; color: #323130; }
.th-in { display: flex; justify-content: space-between; align-items: center; padding-left: 10px; }
.th-1 { padding-right: 20px; }
.th-2 { padding-right: 9px; }
.th-3 { padding-left: 8px; padding-right: 11px; }
.th-4 { padding-left: 8px; }
.sort { font-size: 16px; line-height: 16px; letter-spacing: -1.500px; color: #605e5c; }
.grid-body { display: flex; height: 167px; align-items: flex-start; }
.tbl td { height: 32px; padding: 0 0 0 8px; border-bottom: 1px solid #d2d2d2; color: #484644; white-space: nowrap; overflow: hidden; }
.tbl td:first-child { padding-left: 10px; }
.tbl td:last-child { padding-right: 2px; }
.tbl td.num { text-align: right; padding-right: 7px; }
.vs { width: 16px; height: 167px; flex: none; background: #f1f1f1; display: flex; flex-direction: column; align-items: center; }
.vs .a-u { margin: 7px 0 6px; }
.vs-th { display: block; width: 13px; height: 26px; background: #c1c1c1; }
.vs .a-d { margin-top: auto; margin-bottom: 8px; }
.grid-foot { display: flex; }
.hs-grid { width: 751px; }
.corner { width: 16px; height: 17px; background: #dcdcdc; }

/* spacing steps */
.mt-9 { margin-top: 9px; }
.mt-16 { margin-top: 16px; }
.mt-17 { margin-top: 17px; }
.mt-18 { margin-top: 18px; }
.mt-19 { margin-top: 19px; }
.mt-22 { margin-top: 22px; }
.mt-23 { margin-top: 23px; }
.mt-25 { margin-top: 25px; }
.mt-27 { margin-top: 27px; }
.mt-28 { margin-top: 28px; }
.mt-30 { margin-top: 30px; }
.mt-32 { margin-top: 32px; }
.mt-38 { margin-top: 38px; }
.mt-50 { margin-top: 50px; }
.mt-53 { margin-top: 53px; }
.mt-54 { margin-top: 54px; }
.mt-188 { margin-top: 188px; }
.mt-201 { margin-top: 201px; }
.mt-203 { margin-top: 203px; }
```
